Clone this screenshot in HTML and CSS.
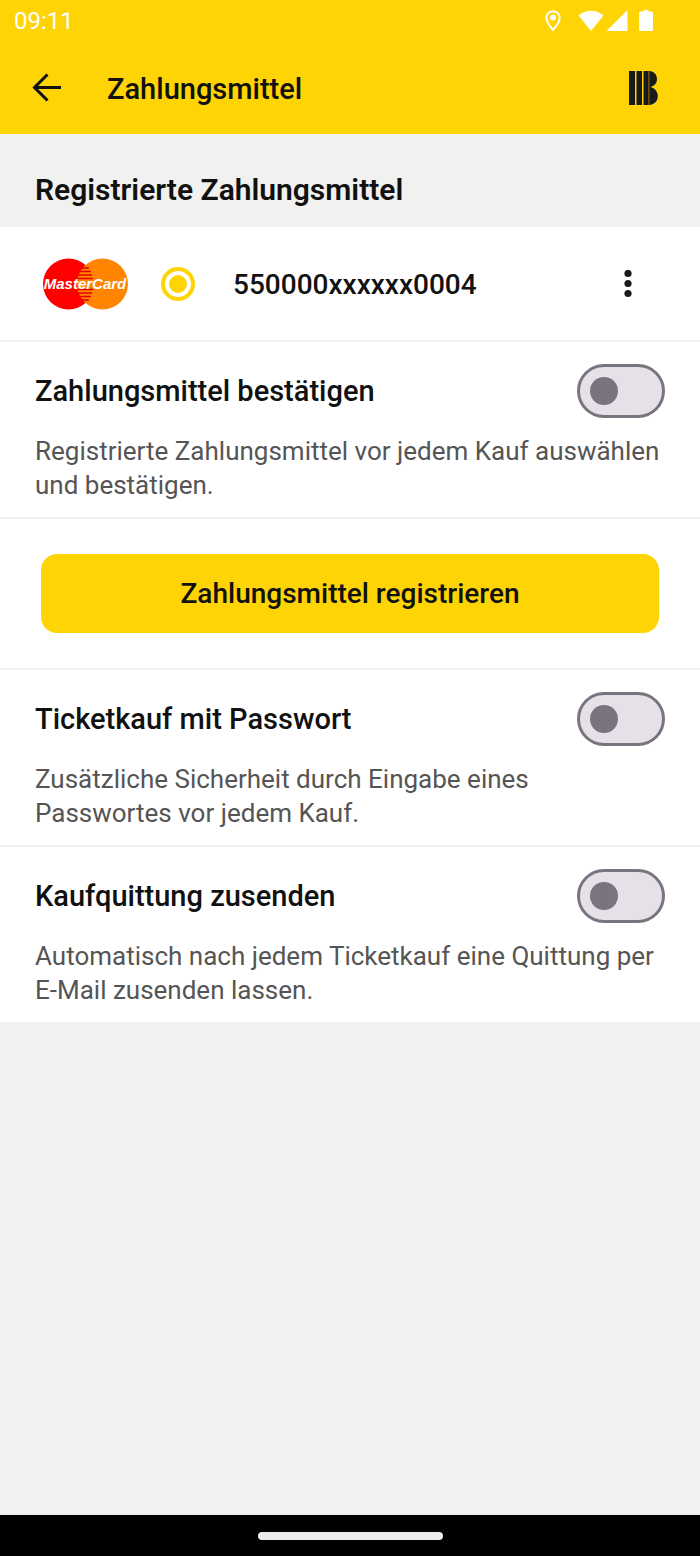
FILE: index.html
```html
<!DOCTYPE html>
<html lang="de">
<head>
  <meta charset="UTF-8">
  <meta name="viewport" content="width=device-width, initial-scale=1.0">
  <title>Zahlungsmittel</title>
  <link rel="stylesheet" href="styles.css">
</head>
<body>
  <div class="status-bar">
    <span class="time">09:11</span>
    <div class="status-icons">
      <svg class="icon-pin" width="16" height="22" viewBox="0 0 16 22">
        <path d="M8 1.2C4.200 1.200 1.300 4.100 1.300 7.800C1.300 12.200 8 20 8 20S14.700 12.200 14.700 7.800C14.700 4.100 11.800 1.200 8 1.200Z" fill="none" stroke="#fff" stroke-width="2"/>
        <circle cx="8" cy="7.500" r="3" fill="#fff"/>
      </svg>
      <svg class="icon-wifi" width="26" height="22" viewBox="0 0 26 22">
        <path d="M0.500 5.500C7.500-1 18.500-1 25.500 5.500L13 21Z" fill="#fff"/>
      </svg>
      <svg class="icon-signal" width="22" height="22" viewBox="0 0 22 22">
        <path d="M21.500 0V21H0.500Z" fill="#fff"/>
      </svg>
      <svg class="icon-battery" width="14" height="22" viewBox="0 0 14 22">
        <path d="M4.500 0H9.500V1.500H12.500Q14 1.500 14 3V19.500Q14 21 12.500 21H1.500Q0 21 0 19.500V3Q0 1.500 1.500 1.500H4.500Z" fill="#fff"/>
      </svg>
    </div>
  </div>

  <header class="app-bar">
    <button class="icon-button" type="button" aria-label="Zurück">
      <svg width="30" height="30" viewBox="0 0 30 30">
        <path d="M29 14.500H3M15.500 1.500L2.500 14.500L15.500 27.500" fill="none" stroke="#111" stroke-width="3"/>
      </svg>
    </button>
    <h1>Zahlungsmittel</h1>
    <svg class="logo" width="29" height="34" viewBox="0 0 29 34">
      <g fill="#1a1a1a">
        <rect x="0" y="0" width="6" height="34"/>
        <rect x="7.500" y="0" width="5.500" height="34"/>
        <rect x="14.500" y="0" width="5.200" height="34"/>
        <path d="M20.200 0C25 0.300 28 3.500 28 8C28 12 25.500 14.800 22 15.800V16.200C26 17 28.800 21 28.800 25C28.800 30 25.500 33.500 20.200 34Z"/>
      </g>
    </svg>
  </header>

  <main>
    <h2>Registrierte Zahlungsmittel</h2>

    <div class="row card-row">
      <svg class="mastercard" width="86" height="52" viewBox="0 0 86 52" role="img" aria-label="MasterCard">
        <circle cx="25.500" cy="26" r="25.500" fill="#f00"/>
        <circle cx="59.500" cy="26" r="25.500" fill="#ff8500"/>
        <path d="M39 10H46M37 13.500H48M35.500 17H49M35 20.500H50M35 31.500H50M35.500 35H49M37 38.500H48M39 42H46" stroke="#e60000" stroke-width="1.500"/>
        <text class="mastercard-text" x="42" y="31" text-anchor="middle">MasterCard</text>
      </svg>
      <input class="radio" type="radio" name="zahlungsmittel" id="karte" checked>
      <label class="card-number" for="karte">550000xxxxxx0004</label>
      <button class="icon-button" type="button" aria-label="Mehr">
        <svg width="8" height="28" viewBox="0 0 8 28">
          <g fill="#1a1a1a">
            <circle cx="4" cy="3.500" r="3.600"/>
            <circle cx="4" cy="13.500" r="3.600"/>
            <circle cx="4" cy="23.500" r="3.600"/>
          </g>
        </svg>
      </button>
    </div>

    <div class="row setting">
      <div class="setting-head">
        <label for="bestaetigen">Zahlungsmittel bestätigen</label>
        <input class="switch" type="checkbox" role="switch" id="bestaetigen">
      </div>
      <p>Registrierte Zahlungsmittel vor jedem Kauf auswählen<br>und bestätigen.</p>
    </div>

    <div class="row action">
      <button class="primary" type="button">Zahlungsmittel registrieren</button>
    </div>

    <div class="row setting">
      <div class="setting-head">
        <label for="passwort">Ticketkauf mit Passwort</label>
        <input class="switch" type="checkbox" role="switch" id="passwort">
      </div>
      <p>Zusätzliche Sicherheit durch Eingabe eines<br>Passwortes vor jedem Kauf.</p>
    </div>

    <div class="row setting">
      <div class="setting-head">
        <label for="quittung">Kaufquittung zusenden</label>
        <input class="switch" type="checkbox" role="switch" id="quittung">
      </div>
      <p>Automatisch nach jedem Ticketkauf eine Quittung per<br>E-Mail zusenden lassen.</p>
    </div>
  </main>

  <div class="nav-bar"><div class="nav-handle"></div></div>
</body>
</html>
```
FILE: styles.css
```css
* { box-sizing: border-box; }
body { margin: 0; min-height: 100vh; display: flex; flex-direction: column; font-family: Roboto, sans-serif; background: #f1f1ef; color: #111; }
h1, h2, p { margin: 0; }
svg { display: block; }
button { border: none; cursor: pointer; font-family: inherit; color: inherit; }

.status-bar { display: flex; justify-content: space-between; align-items: center; height: 42px; padding: 0 47px 0 14px; background: #ffd405; color: #fff; }
.time { font-size: 24px; line-height: 42px; }
.status-icons { display: flex; align-items: center; }
.icon-wifi { margin-left: 17px; }
.icon-signal { margin-left: 2px; }
.icon-battery { margin-left: 11px; }

.app-bar { display: flex; align-items: center; height: 92px; padding: 0 42px 0 32px; background: #ffd405; }
.app-bar h1 { flex: 1; margin-left: 45px; padding-top: 2px; font-size: 29px; line-height: 36px; font-weight: 500; }
.icon-button { padding: 0; background: none; }

main { flex: 1; }
h2 { padding: 38px 35px 19px; font-size: 30px; line-height: 36px; font-weight: 600; }

.row { padding: 0 35px; background: #fff; border-bottom: 2px solid #f1f1ef; }
.row:last-child { border-bottom: none; }
.card-row { display: flex; align-items: center; height: 115px; padding: 0 68px 0 43px; }
.card-number { flex: 1; margin-left: 38px; padding-top: 2px; font-size: 28px; line-height: 34px; font-weight: 500; }
.mastercard-text { font-family: "Liberation Sans", sans-serif; font-size: 15px; font-weight: 700; font-style: italic; fill: #fff; }

.radio { appearance: none; display: grid; place-items: center; width: 34px; height: 34px; margin: 0 0 0 32px; border: 4px solid #ffd405; border-radius: 50%; }
.radio:checked::before { content: ""; width: 18px; height: 18px; border-radius: 50%; background: #ffd405; }

.setting { padding-top: 22px; padding-bottom: 15px; }
.setting-head { display: flex; justify-content: space-between; align-items: center; }
.setting-head label { font-size: 29px; line-height: 36px; font-weight: 500; }
.setting p { margin-top: 16px; font-size: 26px; line-height: 34px; color: #555; }

.switch { appearance: none; display: flex; align-items: center; width: 88px; height: 54px; margin: 0; padding-left: 10px; border: 3px solid #79747e; border-radius: 27px; background: #e6e0e9; cursor: pointer; }
.switch::before { content: ""; width: 28px; height: 28px; border-radius: 50%; background: #79747e; }
.switch:checked::before { margin-left: 34px; }

.action { padding: 35px 41px; }
.primary { display: block; width: 100%; height: 79px; border-radius: 16px; background: #ffd405; font-size: 28px; font-weight: 500; }

.nav-bar { display: flex; justify-content: center; align-items: center; height: 41px; background: #000; }
.nav-handle { width: 185px; height: 8px; border-radius: 4px; background: #ececec; }
```
